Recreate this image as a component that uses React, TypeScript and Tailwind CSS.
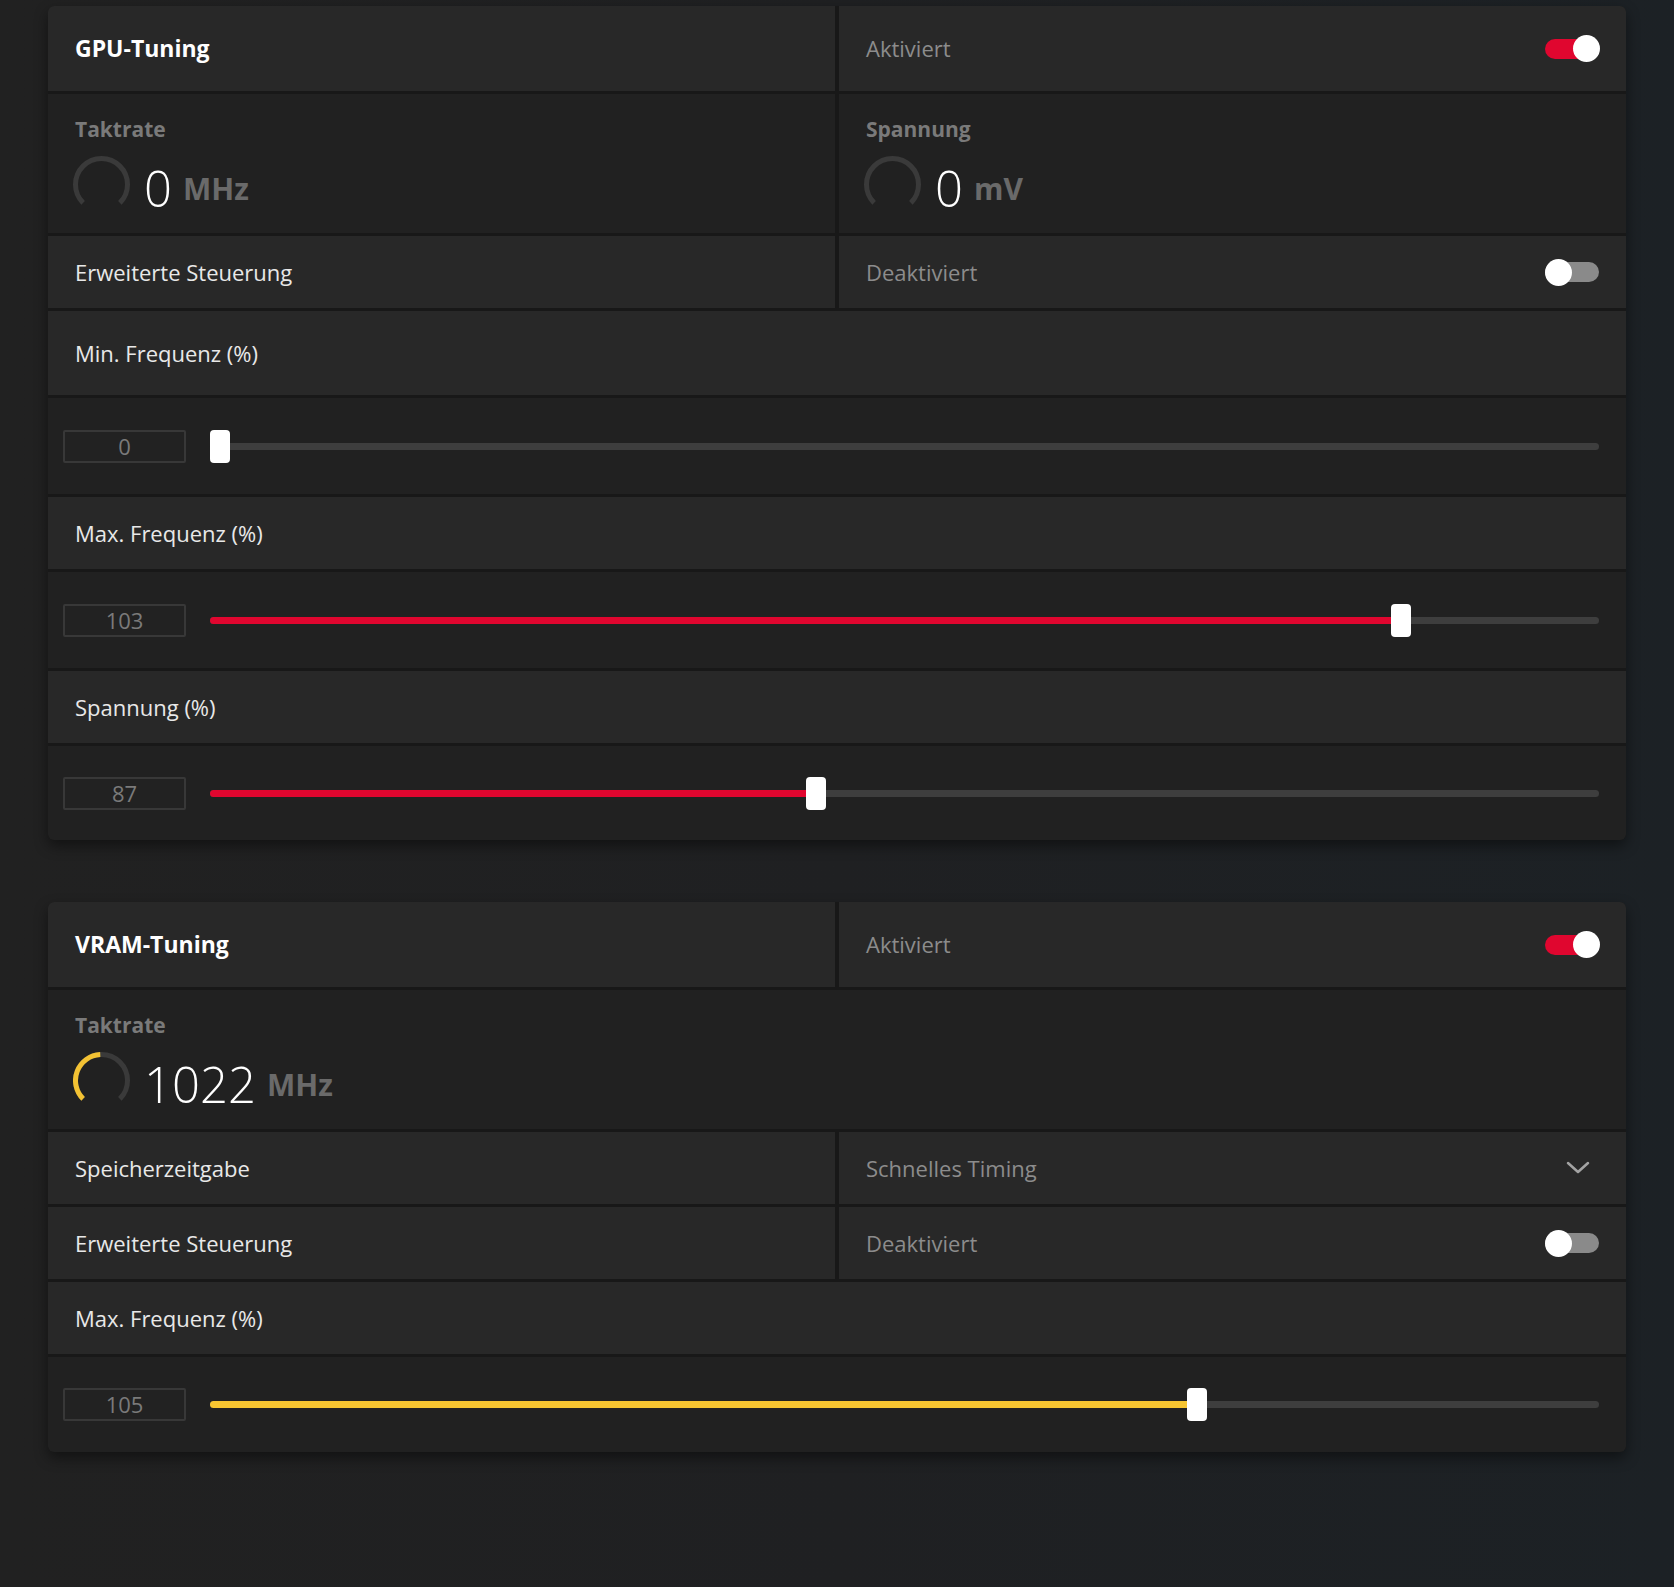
import React from "react";

const FONT = { fontFamily: '"Open Sans", "Noto Sans", sans-serif' };

function Toggle({ on }: { on: boolean }) {
  return (
    <div className="relative w-[55px] h-[27px] flex items-center">
      <div className={`w-[54px] h-[20px] rounded-full ${on ? "bg-[#e0062f]" : "bg-[#8a8a8a]"}`} />
      <div className={`absolute top-0 w-[27px] h-[27px] rounded-full bg-white ${on ? "right-0" : "left-0"}`} />
    </div>
  );
}

function Gauge({ frac, color }: { frac: number; color: string }) {
  const r = 26;
  const cx = 28.5;
  const cy = 28.5;
  const pt = (deg: number) => {
    const a = (deg * Math.PI) / 180;
    return [cx + r * Math.cos(a), cy + r * Math.sin(a)];
  };
  const [sx, sy] = pt(135);
  const [ex, ey] = pt(405);
  const fillEnd = 135 + 270 * frac;
  const [fx, fy] = pt(fillEnd);
  const large = 270 * frac > 180 ? 1 : 0;
  return (
    <svg width="57" height="57" viewBox="0 0 57 57" className="shrink-0">
      <path d={`M ${sx} ${sy} A ${r} ${r} 0 1 1 ${ex} ${ey}`} fill="none" stroke="#3a3a3a" strokeWidth="5" />
      {frac > 0 && (
        <path d={`M ${sx} ${sy} A ${r} ${r} 0 ${large} 1 ${fx} ${fy}`} fill="none" stroke={color} strokeWidth="5" />
      )}
    </svg>
  );
}

function Stat({ label, value, unit, frac = 0, color = "#f3c233" }: { label: string; value: string; unit: string; frac?: number; color?: string }) {
  return (
    <div className="h-full bg-[#212121] px-[25px] pt-[21px] flex flex-col">
      <div className="text-[21px] leading-[28px] font-bold text-[#7a7a7a] pl-[2px]">{label}</div>
      <div className="flex items-center mt-[13px] h-[57px]">
        <Gauge frac={frac} color={color} />
        <span className="ml-[14px] text-[49px] leading-none font-light text-white mt-[8px]">{value}</span>
        <span className="ml-[11px] text-[30px] leading-none font-bold text-[#6a6a6a] mt-[9px]">{unit}</span>
      </div>
    </div>
  );
}

function HeaderRow({ title, status }: { title: string; status: string }) {
  return (
    <div className="grid grid-cols-2 gap-[4px] h-[85px]">
      <div className="bg-[#282828] flex items-center px-[27px] text-[23px] font-bold text-white">{title}</div>
      <div className="bg-[#282828] flex items-center justify-between pl-[27px] pr-[26px] text-[22px] text-[#8c8c8c]">
        <span>{status}</span>
        <Toggle on />
      </div>
    </div>
  );
}

function SplitRow({ label, right, children }: { label: string; right: string; children: React.ReactNode }) {
  return (
    <div className="grid grid-cols-2 gap-[4px] h-[72px]">
      <div className="bg-[#282828] flex items-center px-[27px] text-[22px] text-[#e8e8e8]">{label}</div>
      <div className="bg-[#282828] flex items-center justify-between pl-[27px] pr-[26px] text-[22px] text-[#8c8c8c]">
        <span>{right}</span>
        {children}
      </div>
    </div>
  );
}

function LabelRow({ label, h = "h-[72px]" }: { label: string; h?: string }) {
  return <div className={`bg-[#282828] ${h} flex items-center px-[27px] text-[22px] text-[#e8e8e8]`}>{label}</div>;
}

function SliderRow({ value, frac, color, h = "h-[96px]" }: { value: string; frac: number; color: string; h?: string }) {
  const thumbLeft = `calc(${frac * 100}% - ${frac * 20}px)`;
  const fillW = `calc(${frac * 100}% - ${frac * 20}px + 10px)`;
  return (
    <div className={`bg-[#212121] ${h} flex items-center pl-[15px] pr-[27px]`}>
      <div className="w-[123px] h-[33px] border-2 border-[#383838] rounded-[2px] bg-[#222222] flex items-center justify-center text-[22px] text-[#7a7a7a]">
        {value}
      </div>
      <div className="relative flex-1 ml-[24px] h-[33px]">
        <div className="absolute left-0 right-0 top-[13px] h-[7px] rounded-full bg-[#3e3e3e]" />
        {frac > 0 && (
          <div className="absolute left-0 top-[13px] h-[7px] rounded-full" style={{ width: fillW, backgroundColor: color }} />
        )}
        <div className="absolute top-0 w-[20px] h-[33px] rounded-[4px] bg-white" style={{ left: thumbLeft }} />
      </div>
    </div>
  );
}

function Chevron() {
  return (
    <svg width="24" height="14" viewBox="0 0 24 14" className="mr-[10px]">
      <polyline points="2,2 12,11 22,2" fill="none" stroke="#a3a3a3" strokeWidth="2.5" strokeLinecap="round" strokeLinejoin="round" />
    </svg>
  );
}

export default function App() {
  return (
    <div
      className="min-h-[1587px] w-full bg-gradient-to-r from-[#212121] via-[#1f2022] to-[#1c2125] px-[48px] pt-[6px]"
      style={FONT}
    >
      <div className="flex flex-col gap-[3px] bg-[#181818] rounded-[6px] overflow-hidden shadow-[0_6px_14px_rgba(0,0,0,0.45)]">
        <HeaderRow title="GPU-Tuning" status="Aktiviert" />
        <div className="grid grid-cols-2 gap-[4px] h-[139px]">
          <Stat label="Taktrate" value="0" unit="MHz" />
          <Stat label="Spannung" value="0" unit="mV" />
        </div>
        <SplitRow label="Erweiterte Steuerung" right="Deaktiviert">
          <Toggle on={false} />
        </SplitRow>
        <LabelRow label="Min. Frequenz (%)" h="h-[84px]" />
        <SliderRow value="0" frac={0} color="#e0062f" />
        <LabelRow label="Max. Frequenz (%)" />
        <SliderRow value="103" frac={0.863} color="#e0062f" />
        <LabelRow label="Spannung (%)" />
        <SliderRow value="87" frac={0.435} color="#e0062f" h="h-[94px]" />
      </div>

      <div className="mt-[62px] flex flex-col gap-[3px] bg-[#181818] rounded-[6px] overflow-hidden shadow-[0_6px_14px_rgba(0,0,0,0.45)]">
        <HeaderRow title="VRAM-Tuning" status="Aktiviert" />
        <div className="h-[139px]">
          <Stat label="Taktrate" value="1022" unit="MHz" frac={0.49} color="#f3c233" />
        </div>
        <SplitRow label="Speicherzeitgabe" right="Schnelles Timing">
          <Chevron />
        </SplitRow>
        <SplitRow label="Erweiterte Steuerung" right="Deaktiviert">
          <Toggle on={false} />
        </SplitRow>
        <LabelRow label="Max. Frequenz (%)" />
        <SliderRow value="105" frac={0.714} color="#f7c531" h="h-[95px]" />
      </div>
    </div>
  );
}
